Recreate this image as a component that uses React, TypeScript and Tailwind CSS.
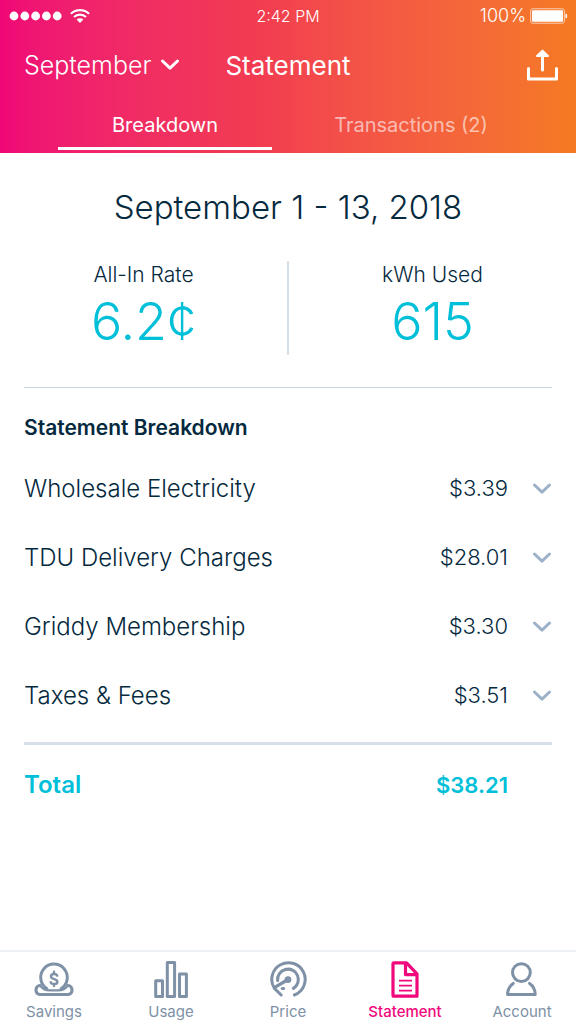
import React, { useState } from "react";

const MONTHS = ["July", "August", "September"];

const CHARGES = [
  { label: "Wholesale Electricity", amount: "$3.39" },
  { label: "TDU Delivery Charges", amount: "$28.01" },
  { label: "Griddy Membership", amount: "$3.30" },
  { label: "Taxes & Fees", amount: "$3.51" },
];

const TABS = ["Breakdown", "Transactions (2)"];

const Chevron = ({ className }: { className: string }) => (
  <svg viewBox="0 0 20 12" className={className} fill="none" stroke="currentColor" strokeWidth="3" strokeLinecap="round" strokeLinejoin="round" aria-hidden="true">
    <path d="M2.5 2 L10 9.2 L17.5 2" />
  </svg>
);

const StatusBar = () => (
  <div className="grid h-8 grid-cols-3 items-center px-2 font-light">
    <div className="flex items-center gap-2">
      <svg viewBox="0 0 54 10" className="h-[10px] w-[54px]" fill="currentColor" aria-label="Signal strength">
        <circle cx="6" cy="5" r="4.4" />
        <circle cx="16.8" cy="5" r="4.4" />
        <circle cx="27.6" cy="5" r="4.4" />
        <circle cx="38.4" cy="5" r="4.4" />
        <circle cx="49.2" cy="5" r="4.4" />
      </svg>
      <svg viewBox="0 0 20 14" className="h-[14px] w-5" fill="none" stroke="currentColor" strokeWidth="2.2" aria-label="Wi-Fi">
        <path d="M0.9 4.8 C6 0 14 0 19.1 4.8" />
        <path d="M4 8 C7.4 4.9 12.6 4.9 16 8" />
        <path d="M6.6 10.4 C8.6 8.7 11.4 8.7 13.4 10.4 L10 13.9 Z" fill="currentColor" stroke="none" />
      </svg>
    </div>
    <span className="text-center text-base">2:42 PM</span>
    <div className="flex items-center justify-end gap-1 text-lg">
      <span>100%</span>
      <svg viewBox="0 0 38 16" className="h-4 w-[38px]" fill="currentColor" aria-label="Battery full">
        <rect x="0.6" y="0.8" width="33.8" height="14.4" rx="2" fill="none" stroke="currentColor" strokeOpacity="0.65" />
        <rect x="2" y="2.2" width="31" height="11.6" rx="1" />
        <path d="M35.5 5.5 C37.8 6 37.8 10 35.5 10.5 Z" />
      </svg>
    </div>
  </div>
);

const Stat = ({ label, value }: { label: string; value: string }) => (
  <div className="flex flex-col items-center">
    <span className="text-[21px] leading-7 font-light">{label}</span>
    <span className="text-[52px] leading-[66px] font-light text-[#00bfd8]">{value}</span>
  </div>
);

const SavingsIcon = () => (
  <svg viewBox="0 0 40 40" className="size-10" fill="none" stroke="currentColor" strokeWidth="3" strokeLinecap="round" strokeLinejoin="round">
    <path d="M12.8 28.6 A13.3 13.3 0 1 1 27.2 28.6" />
    <path d="M5.8 25.4 A4.7 4.7 0 0 0 5.6 34.6 H34.4 A4.7 4.7 0 0 0 34.2 25.4" />
    <path d="M6 25.4 C8.5 29.4 12 30.4 16 30.4 H24 C28 30.4 31.5 29.4 34 25.4" strokeWidth="2.2" />
    <path d="M23.2 15.7 C22.6 13.6 17 13.2 17 16.4 C17 19.8 23.4 18.3 23.4 21.7 C23.4 25 17.2 24.5 16.7 22.2 M20 11.6 V13.8 M20 24.4 V26" strokeWidth="2.4" />
  </svg>
);

const UsageIcon = () => (
  <svg viewBox="0 0 40 40" className="size-10" fill="none" stroke="currentColor" strokeWidth="3" strokeLinejoin="round">
    <path d="M4.7 20.8 H11.5 V36.4 H4.7 Z" />
    <path d="M16.3 2.6 H23.6 V36.4 H16.3 Z" />
    <path d="M28.5 14 H35.4 V36.4 H28.5 Z" />
  </svg>
);

const PriceIcon = () => (
  <svg viewBox="0 0 40 40" className="size-10" fill="none" stroke="currentColor" strokeWidth="3" strokeLinecap="round">
    <path d="M13.2 35 L6.4 28.4 A16.7 16.7 0 1 1 26.4 35" strokeLinejoin="round" />
    <path d="M9.6 20.6 A10.4 10.4 0 1 1 25.4 28.4" />
    <path d="M8 26.6 L19.6 19.8" strokeWidth="3.4" />
    <circle cx="20" cy="19.6" r="3.4" fill="currentColor" stroke="none" />
    <path d="M14.4 28.4 H15.6" />
  </svg>
);

const StatementIcon = () => (
  <svg viewBox="0 0 40 40" className="size-10" fill="none" stroke="currentColor" strokeWidth="3.2" strokeLinejoin="round">
    <path d="M9 2.8 H21.5 L32 13.8 V36.2 H9 Q8 36.2 8 35.2 V3.8 Q8 2.8 9 2.8 Z" />
    <path d="M20.5 3 V14.6 H32" />
    <path d="M14 20.6 H27 M14 25.6 H27 M14 30.6 H27" strokeWidth="1.8" />
  </svg>
);

const AccountIcon = () => (
  <svg viewBox="0 0 40 40" className="size-10" fill="none" stroke="currentColor" strokeWidth="3" strokeLinecap="round" strokeLinejoin="round">
    <circle cx="19.4" cy="12.6" r="8.9" />
    <path d="M11.2 23.4 C7.4 26 5.6 29.8 5.6 34.6 H33.2 C33.2 29.8 31.4 26 27.6 23.4" />
  </svg>
);

const NAV = [
  { label: "Savings", icon: SavingsIcon },
  { label: "Usage", icon: UsageIcon },
  { label: "Price", icon: PriceIcon },
  { label: "Statement", icon: StatementIcon, active: true },
  { label: "Account", icon: AccountIcon },
];

export default function App() {
  const [month, setMonth] = useState("September");
  const [tab, setTab] = useState(0);

  return (
    <div className="flex min-h-screen flex-col bg-white font-['Inter',sans-serif] text-[#05293e]">
      <header className="bg-linear-to-r from-[#ef0677] via-[#f23c50] via-45% to-[#f57a22] text-white">
        <StatusBar />

        <div className="grid h-[66px] grid-cols-[1fr_auto_1fr] items-center px-4">
          <div className="flex items-center pl-2">
            <div className="relative flex items-center">
              <select
                aria-label="Month"
                value={month}
                onChange={(e) => setMonth(e.target.value)}
                className="h-12 appearance-none bg-transparent pr-7 text-[25px] leading-10 font-light"
              >
                {MONTHS.map((m) => (
                  <option key={m} className="text-black">{m}</option>
                ))}
              </select>
              <Chevron className="pointer-events-none absolute right-0 h-3 w-5" />
            </div>
          </div>
          <h1 className="text-[26px] font-normal">Statement</h1>
          <button type="button" aria-label="Share" className="justify-self-end">
            <svg viewBox="0 0 34 34" className="size-[34px]" fill="none" stroke="currentColor" strokeWidth="3" strokeLinecap="round" strokeLinejoin="round">
              <path d="M2.5 20.5 V31 H30.5 V20.5" />
              <path d="M16.5 22 V6" />
              <path d="M11 8 L16.5 2.6 L22 8 Z" fill="currentColor" strokeWidth="2" />
            </svg>
          </button>
        </div>

        <div role="tablist" className="grid grid-cols-2 gap-8 px-[58px] pb-[3px]">
          {TABS.map((name, i) => (
            <button
              key={name}
              type="button"
              role="tab"
              aria-selected={tab === i}
              onClick={() => setTab(i)}
              className={
                tab === i
                  ? "h-[52px] border-b-3 border-white pt-1 text-xl whitespace-nowrap"
                  : "h-[52px] border-b-3 border-transparent pt-1 text-xl whitespace-nowrap text-white/60"
              }
            >
              {name}
            </button>
          ))}
        </div>
      </header>

      <main className="px-6 pb-10">
        <h2 className="pt-8 text-center text-[33px] leading-[44px] font-light">September 1 - 13, 2018</h2>

        <section className="mt-8 border-b border-[#cbd6e0] pb-8">
          <div className="-mx-6 grid grid-cols-[1fr_2px_1fr]">
            <Stat label="All-In Rate" value="6.2¢" />
            <div className="bg-[#d7e0e8]" />
            <Stat label="kWh Used" value="615" />
          </div>
        </section>

        <h3 className="mt-6 text-[21px] leading-8 font-semibold">Statement Breakdown</h3>

        <ul className="mt-[10px]">
          {CHARGES.map((charge) => (
            <li key={charge.label}>
              <button type="button" className="flex h-[69px] w-full items-center text-left font-light">
                <span className="flex-1 text-2xl">{charge.label}</span>
                <span className="text-[22px]">{charge.amount}</span>
                <Chevron className="ml-6 h-3 w-5 text-[#9db1c8]" />
              </button>
            </li>
          ))}
        </ul>

        <div className="mt-3 flex justify-between border-t-3 border-[#d7e0e8] pt-6 pr-11 font-semibold text-[#00bfd8]">
          <span className="text-2xl leading-8">Total</span>
          <span className="text-[22px] leading-8">$38.21</span>
        </div>
      </main>

      <nav className="sticky bottom-0 mt-auto flex justify-between border-t-2 border-[#edf1f5] bg-white px-2 pt-2">
        {NAV.map(({ label, icon: Icon, active }) => (
          <a
            key={label}
            href={`#${label.toLowerCase()}`}
            aria-current={active ? "page" : undefined}
            className={
              active
                ? "flex w-[92px] flex-col items-center text-[15px] leading-6 font-medium text-[#f0087c]"
                : "flex w-[92px] flex-col items-center text-[15px] leading-6 text-[#7e91a6]"
            }
          >
            <Icon />
            {label}
          </a>
        ))}
      </nav>
    </div>
  );
}
